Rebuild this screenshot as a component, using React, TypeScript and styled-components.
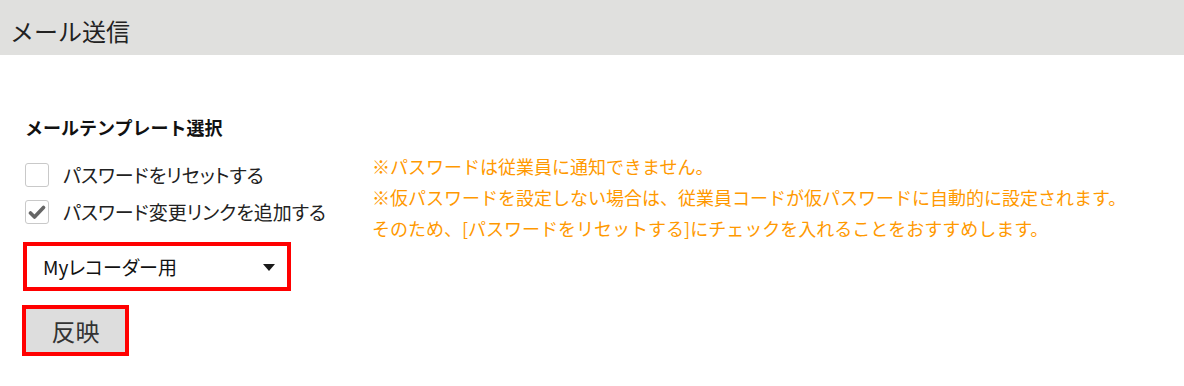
import React from 'react'
import styled, { createGlobalStyle } from 'styled-components'

const GlobalStyle = createGlobalStyle`
  html, body {
    margin: 0;
    padding: 0;
    background: #fff;
  }
  body {
    font-family: "Noto Sans CJK JP", "Noto Sans", sans-serif;
    color: #222;
  }
`

const PageHeader = styled.header`
  box-sizing: border-box;
  height: 55px;
  padding: 16px 0 0 10px;
  background: #e0e0de;
`

const PageTitle = styled.h1`
  margin: 0;
  font-size: 24px;
  line-height: 30px;
  font-weight: 400;
  color: #222;
`

const Content = styled.main`
  padding: 59px 22px 0 22px;
`

const SectionTitle = styled.h2`
  margin: 0 0 10px 3px;
  font-size: 18px;
  line-height: 26px;
  font-weight: 700;
  color: #111;
`

const FormRow = styled.div`
  display: flex;
  align-items: flex-start;
`

const LeftColumn = styled.div`
  display: flex;
  flex-direction: column;
  align-items: flex-start;
  width: 350px;
  padding-top: 6px;
`

const CheckRow = styled.label`
  display: flex;
  align-items: center;
  gap: 14px;
  height: 37px;
  margin-left: 3px;
  font-size: 19px;
  color: #222;
  font-feature-settings: 'palt';
  cursor: pointer;
`

const Box = styled.span`
  box-sizing: border-box;
  display: flex;
  align-items: center;
  justify-content: center;
  width: 24px;
  height: 24px;
  border: 1px solid #c9c9c9;
  border-radius: 3px;
  background: #fff;
`

const SelectWrap = styled.div`
  position: relative;
  margin: 12px 0 0 1px;
  &::after {
    content: '';
    position: absolute;
    right: 16px;
    top: 22px;
    border-left: 6px solid transparent;
    border-right: 6px solid transparent;
    border-top: 7px solid #1a1a1a;
    pointer-events: none;
  }
`

const TemplateSelect = styled.select`
  box-sizing: border-box;
  appearance: none;
  -webkit-appearance: none;
  width: 268px;
  height: 49px;
  padding: 0 0 0 16px;
  border: 4px solid #ff0000;
  border-radius: 0;
  background: #fff;
  font-family: "Noto Sans CJK JP", "Noto Sans", sans-serif;
  font-size: 19px;
  color: #111;
  font-feature-settings: 'palt';
  outline: none;
`

const ApplyButton = styled.button`
  box-sizing: border-box;
  width: 107px;
  height: 51px;
  margin-top: 14px;
  padding: 0;
  border: 4px solid #ff0000;
  background: #dddddd;
  font-family: "Noto Sans CJK JP", "Noto Sans", sans-serif;
  font-size: 24px;
  color: #333;
  cursor: pointer;
`

const Notes = styled.div`
  padding-top: 1px;
  font-size: 18px;
  line-height: 31px;
  color: #ff9900;
`

const NoteLine = styled.p`
  margin: 0;
`

function CheckMark() {
  return (
    <svg width="18" height="16" viewBox="0 0 18 16">
      <path d="M2.5 9 L6.5 13 L15.5 3.5" fill="none" stroke="#666" strokeWidth="3.6" strokeLinecap="round" strokeLinejoin="round" />
    </svg>
  )
}

function Checkbox({ label, checked }: { label: string; checked?: boolean }) {
  return (
    <CheckRow>
      <Box>{checked && <CheckMark />}</Box>
      {label}
    </CheckRow>
  )
}

export default function App() {
  return (
    <>
      <GlobalStyle />
      <PageHeader>
        <PageTitle>メール送信</PageTitle>
      </PageHeader>
      <Content>
        <SectionTitle>メールテンプレート選択</SectionTitle>
        <FormRow>
          <LeftColumn>
            <Checkbox label="パスワードをリセットする" />
            <Checkbox label="パスワード変更リンクを追加する" checked />
            <SelectWrap>
              <TemplateSelect defaultValue="my">
                <option value="my">Myレコーダー用</option>
              </TemplateSelect>
            </SelectWrap>
            <ApplyButton>反映</ApplyButton>
          </LeftColumn>
          <Notes>
            <NoteLine>※パスワードは従業員に通知できません。</NoteLine>
            <NoteLine>※仮パスワードを設定しない場合は、従業員コードが仮パスワードに自動的に設定されます。</NoteLine>
            <NoteLine>そのため、[パスワードをリセットする]にチェックを入れることをおすすめします。</NoteLine>
          </Notes>
        </FormRow>
      </Content>
    </>
  )
}
